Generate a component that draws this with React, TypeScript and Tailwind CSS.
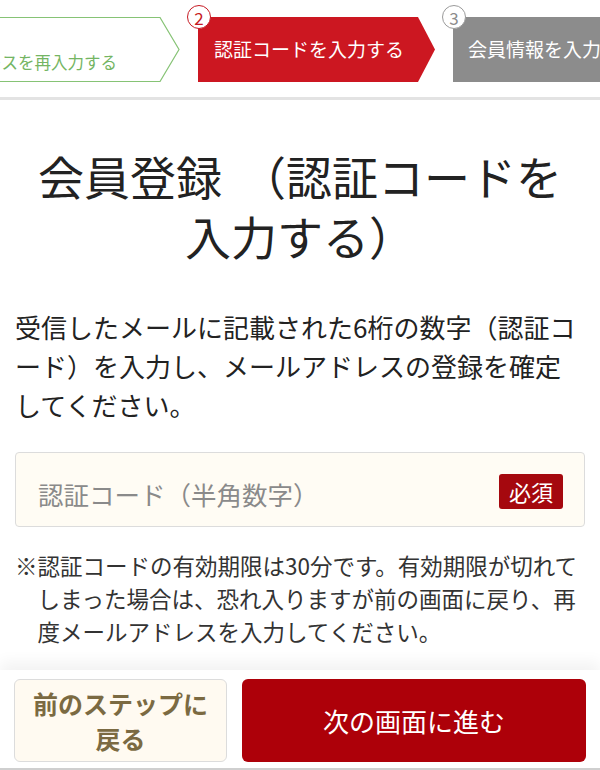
import React from "react";

const steps = [
  { no: 1, label: "メールアドレスを再入力する" },
  { no: 2, label: "認証コードを入力する" },
  { no: 3, label: "会員情報を入力する" },
];

function StepCircle({ no, color }: { no: number; color: string }) {
  return (
    <div
      className={`absolute -left-[11px] -top-[12px] w-[24px] h-[24px] rounded-full bg-white border-[1.5px] flex items-center justify-center text-[17px] leading-none ${color}`}
    >
      {no}
    </div>
  );
}

export default function App() {
  return (
    <div className="min-h-screen bg-white font-['Noto_Sans_CJK_JP',sans-serif] text-[#222]">
      {/* Step bar */}
      <div className="overflow-hidden pt-[17px]">
        <div className="flex gap-[18px] -ml-[20px] w-[720px]">
          {/* Step 1 - done */}
          <div className="relative w-[200px] h-[65px] shrink-0 flex items-end justify-end pr-[63px] pb-[8px]">
            <svg className="absolute inset-0" width="200" height="65" viewBox="0 0 200 65">
              <polygon
                points="0.5,0.5 180,0.5 199,32.5 180,64.5 0.5,64.5"
                fill="#fff"
                stroke="#86c375"
                strokeWidth="1.2"
              />
            </svg>
            <span className="relative whitespace-nowrap text-[16.5px] leading-[24px] text-[#74b563]">
              {steps[0].label}
            </span>
          </div>

          {/* Step 2 - current */}
          <div className="relative w-[237px] h-[65px] shrink-0 flex items-center pl-[16px]">
            <svg className="absolute inset-0" width="237" height="65" viewBox="0 0 237 65">
              <polygon points="0,0 220,0 237,32.5 220,65 0,65" fill="#cc1721" />
            </svg>
            <span className="relative whitespace-nowrap text-[19px] text-white">{steps[1].label}</span>
            <StepCircle no={2} color="border-[#c61a23] text-[#c61a23]" />
          </div>

          {/* Step 3 - next */}
          <div className="relative w-[237px] h-[65px] shrink-0 flex items-center pl-[15px] bg-[#8c8c8c]">
            <span className="relative whitespace-nowrap text-[19px] text-white">{steps[2].label}</span>
            <StepCircle no={3} color="border-[#9a9a9a] text-[#8c8c8c]" />
          </div>
        </div>
        <div className="mt-[15px] h-[3px] bg-[#e3e3e3]" />
      </div>

      {/* Main content */}
      <div className="px-[15px] pb-[130px]">
        <h1 className="mt-[45px] text-center text-[46px] leading-[60px] font-normal">
          会員登録<span className="ml-[18px]">（認証コードを</span>
          <br />
          入力する）
        </h1>

        <p className="mt-[42px] text-[26px] leading-[39px] text-[#222]">
          受信したメールに記載された6桁の数字（認証コ
          <br />
          ード）を入力し、メールアドレスの登録を確定
          <br />
          してください。
        </p>

        <div className="mt-[28px] h-[75px] bg-[#fffcf4] border border-[#dcdcdc] rounded-[4px] flex items-center justify-between pl-[22px] pr-[21px]">
          <span className="text-[25.5px] text-[#8a8a8a] pt-[10px]">認証コード（半角数字）</span>
          <span className="w-[64px] h-[35px] mt-[3px] rounded-[3px] bg-[#a5080e] text-white text-[22px] flex items-center justify-center">
            必須
          </span>
        </div>

        <p className="mt-[22px] text-[22.5px] leading-[33px] text-[#333] pl-[1em] -indent-[1em]">
          ※認証コードの有効期限は30分です。有効期限が切れて
          <br />
          しまった場合は、恐れ入りますが前の画面に戻り、再
          <br />
          度メールアドレスを入力してください。
        </p>
      </div>

      {/* Bottom action bar */}
      <div className="fixed bottom-0 inset-x-0 h-[100px] bg-white shadow-[0_-8px_14px_rgba(0,0,0,0.05)] border-b-2 border-[#cfcfcf] flex gap-[15px] px-[14px] pt-[9px]">
        <button className="w-[213px] h-[83px] rounded-[6px] border border-[#dcdcdc] bg-[#fffaf1] text-[#7b6a42] font-bold text-[25px] leading-[35px] px-[10px]">
          前のステップに
          <br />
          戻る
        </button>
        <button className="flex-1 h-[83px] rounded-[6px] bg-[#ad0009] text-white text-[26px]">
          次の画面に進む
        </button>
      </div>
    </div>
  );
}
